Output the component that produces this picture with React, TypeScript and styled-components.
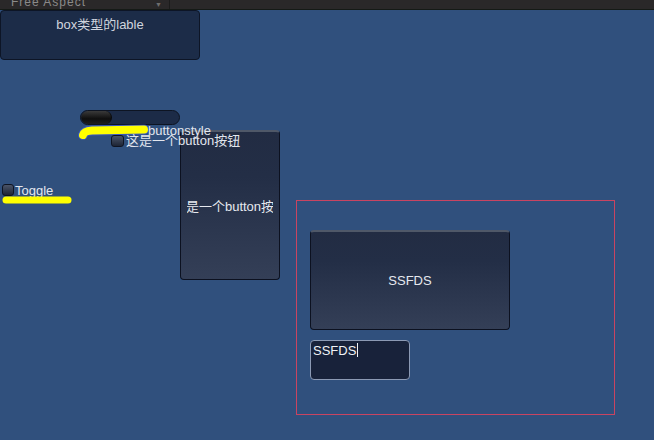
import React from "react"
import styled, { createGlobalStyle, css } from "styled-components"

type Rect = { $x: number; $y: number; $w: number; $h: number }

const GlobalStyle = createGlobalStyle`
  html, body {
    margin: 0;
    padding: 0;
    background: #30507d;
    overflow: hidden;
  }
  body {
    font-family: "Liberation Sans", "Noto Sans CJK SC", Arial, sans-serif;
    font-size: 12px;
    color: #d6dae2;
  }
`

// unity GUI controls are placed by rect, so they sit on a free canvas
const placed = css<Rect>`
  position: absolute;
  left: ${(p) => p.$x}px;
  top: ${(p) => p.$y}px;
  width: ${(p) => p.$w}px;
  height: ${(p) => p.$h}px;
  box-sizing: border-box;
`

const Screen = styled.div`
  width: 654px;
  height: 440px;
  display: flex;
  flex-direction: column;
`

const Toolbar = styled.div`
  height: 9px;
  flex: none;
  display: flex;
  background: #2a2829;
  border-bottom: 1px solid #151a16;
  overflow: hidden;
`

const AspectDropdown = styled.div`
  width: 170px;
  display: flex;
  justify-content: space-between;
  padding: 0 6px 0 11px;
  box-sizing: border-box;
  border-right: 1px solid #1c1c1c;
  color: #8a8a8a;
  font-size: 12px;
  line-height: 1;
  margin-top: -4px;
  letter-spacing: 1px;
`

const Arrow = styled.span`
  font-size: 7px;
  margin-top: 5px;
  color: #6e6e6e;
`

const Canvas = styled.div`
  position: relative;
  flex: 1;
`

const Box = styled.div<Rect>`
  ${placed}
  background: #1c2c48;
  border: 1px solid #0d1526;
  border-radius: 4px;
  text-align: center;
  font-size: 13px;
  padding-top: 3px;
  color: #d0d5de;
`

const Slider = styled.div<Rect>`
  ${placed}
  background: #1c2b47;
  border: 1px solid #0d1422;
  border-radius: 8px;
  overflow: hidden;
`

const Thumb = styled.div<{ $w: number }>`
  width: ${(p) => p.$w}px;
  height: 100%;
  border-radius: 7px;
  background: linear-gradient(#3a3a3a, #0f0f0f 60%, #1e1e1e);
  border-right: 1px solid #0a0a0a;
`

// highlighter strokes drawn over the screenshot
const Scribble = styled.svg<Rect>`
  ${placed}
  overflow: visible;
`

const Label = styled.div<{ $x: number; $y: number }>`
  position: absolute;
  left: ${(p) => p.$x}px;
  top: ${(p) => p.$y}px;
  font-size: 13px;
  line-height: 14px;
  white-space: nowrap;
  color: #e2e6ee;
`

const CheckBox = styled.div<Rect>`
  ${placed}
  background: linear-gradient(#4a5468, #1d2434);
  border: 1px solid #0e1422;
  border-radius: 3px;
`

const Button = styled.div<Rect>`
  ${placed}
  display: flex;
  align-items: center;
  padding: 0 6px;
  background: linear-gradient(#222c43 0%, #232e46 30%, #343f57 100%);
  border: 1px solid #0c1120;
  border-top: 2px solid #4f5868;
  border-radius: 4px;
  font-size: 13px;
  color: #e6e9ef;
`

// content area of a button: text wider than it is cut on both sides
const Clip = styled.div`
  flex: 1;
  display: flex;
  justify-content: center;
  overflow: hidden;
  white-space: nowrap;
`

const Area = styled.div<Rect>`
  ${placed}
  border: 1px solid #c94461;
`

const TextField = styled.div<Rect>`
  ${placed}
  background: #18223a;
  border: 1px solid #8c9ab4;
  border-radius: 4px;
  padding: 2px 2px;
  font-size: 13px;
  line-height: 15px;
  color: #f0f2f6;
`

const Caret = styled.span`
  display: inline-block;
  width: 1px;
  height: 14px;
  background: #f0f2f6;
  vertical-align: -2px;
  margin-left: 1px;
`

export default function App() {
  return (
    <Screen>
      <GlobalStyle />
      <Toolbar>
        <AspectDropdown>
          Free Aspect
          <Arrow>▼</Arrow>
        </AspectDropdown>
      </Toolbar>
      <Canvas>
        <Box $x={0} $y={0} $w={200} $h={50}>
          box类型的lable
        </Box>

        <Button $x={180} $y={120} $w={100} $h={150}>
          <Clip>
            <span>这是一个button按钮</span>
          </Clip>
        </Button>

        <Slider $x={80} $y={100} $w={100} $h={15}>
          <Thumb $w={30} />
        </Slider>
        <Scribble $x={78} $y={114} $w={74} $h={16} viewBox="0 0 74 16">
          <path
            d="M5 11 Q6 7 14 6.5 L66 5.5"
            fill="none"
            stroke="#3f5cff"
            strokeWidth={10}
            strokeLinecap="round"
            opacity={0.55}
          />
          <path
            d="M5 11 Q6 7 14 6.5 L66 5.5"
            fill="none"
            stroke="#ffff00"
            strokeWidth={8}
            strokeLinecap="round"
          />
        </Scribble>
        <Label $x={148} $y={114}>buttonstyle</Label>
        <CheckBox $x={111} $y={125} $w={13} $h={12} />
        <Label $x={126} $y={124}>这是一个button按钮</Label>

        <CheckBox $x={2} $y={174} $w={12} $h={12} />
        <Label $x={15} $y={174}>Toggle</Label>
        <Scribble $x={0} $y={184} $w={74} $h={12} viewBox="0 0 74 12">
          <path
            d="M6 6 L68 6"
            fill="none"
            stroke="#ffff00"
            strokeWidth={7}
            strokeLinecap="round"
          />
        </Scribble>

        <Area $x={296} $y={190} $w={319} $h={215} />
        <Button $x={310} $y={220} $w={200} $h={100}>
          <Clip>
            <span>SSFDS</span>
          </Clip>
        </Button>
        <TextField $x={310} $y={330} $w={100} $h={40}>
          SSFDS
          <Caret />
        </TextField>
      </Canvas>
    </Screen>
  )
}
